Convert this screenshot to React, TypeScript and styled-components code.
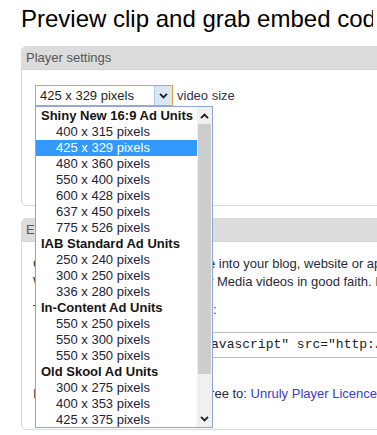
import styled, { createGlobalStyle } from "styled-components";

const GlobalStyle = createGlobalStyle`
  html, body {
    margin: 0;
    padding: 0;
    overflow: hidden;
    background: #ffffff;
  }
  body {
    font-family: "Liberation Sans", Arial, sans-serif;
    color: #333333;
  }
`;

type Group = { label: string; sizes: string[] };

const groups: Group[] = [
  {
    label: "Shiny New 16:9 Ad Units",
    sizes: ["400 x 315", "425 x 329", "480 x 360", "550 x 400", "600 x 428", "637 x 450", "775 x 526"],
  },
  { label: "IAB Standard Ad Units", sizes: ["250 x 240", "300 x 250", "336 x 280"] },
  { label: "In-Content Ad Units", sizes: ["550 x 250", "550 x 300", "550 x 350"] },
  { label: "Old Skool Ad Units", sizes: ["300 x 275", "400 x 353", "425 x 375"] },
];

const selected = "425 x 329";

function Chevron({ dir }: { dir: "up" | "down" }) {
  return (
    <svg width="9" height="6" viewBox="0 0 9 6">
      <polyline
        points={dir === "up" ? "1,5.2 4.5,1.6 8,5.2" : "1,0.8 4.5,4.4 8,0.8"}
        fill="none"
        stroke="#1e1e1e"
        strokeWidth="1.8"
      />
    </svg>
  );
}

export default function App() {
  return (
    <>
      <GlobalStyle />
      <Page>
        <Title>Preview clip and grab embed code</Title>

        <Panel>
          <PanelHeader>Player settings</PanelHeader>
          <PanelBody $height={135}>
            <SettingsRow>
              <SelectWrap>
                <SelectBox>
                  <SelectValue>425 x 329 pixels</SelectValue>
                  <SelectButton>
                    <Chevron dir="down" />
                  </SelectButton>
                </SelectBox>
                <DropList>
                  <Options>
                    {groups.map((g) => (
                      <div key={g.label}>
                        <GroupLabel>{g.label}</GroupLabel>
                        {g.sizes.map((s) => (
                          <Option key={s} $active={s === selected && g.label.startsWith("Shiny")}>
                            {s} pixels
                          </Option>
                        ))}
                      </div>
                    ))}
                  </Options>
                  <ScrollBar>
                    <ScrollArrow>
                      <Chevron dir="up" />
                    </ScrollArrow>
                    <Thumb />
                    <ScrollTrack />
                    <ScrollArrow>
                      <Chevron dir="down" />
                    </ScrollArrow>
                  </ScrollBar>
                </DropList>
              </SelectWrap>
              <FieldLabel>video size</FieldLabel>
            </SettingsRow>
          </PanelBody>
        </Panel>

        <Panel $gap={12}>
          <PanelHeader>Embed code</PanelHeader>
          <PanelBody $height={187}>
            <EmbedContent>
              <Para>
                Copy the code below and paste into your blog, website or app and share it
                <br />
                We trust that you use all Unruly Media videos in good faith. If you have any questions
              </Para>
              <Para>To embed, copy the code given:</Para>
              <CodeBox>&lt;script type="text/javascript" src="http://video.unrulymedia.com/</CodeBox>
              <Para>
                I have read understood and agree to: <Link>Unruly Player Licence Agreement</Link>
              </Para>
            </EmbedContent>
          </PanelBody>
        </Panel>
      </Page>
    </>
  );
}

const Page = styled.div`
  padding: 5px 0 0 21px;
  width: 460px;
`;

const Title = styled.h1`
  margin: 0;
  width: 352px;
  overflow: hidden;
  font-size: 24px;
  line-height: 27px;
  font-weight: normal;
  color: #000000;
  white-space: nowrap;
`;

const Panel = styled.section<{ $gap?: number }>`
  margin-top: ${(p) => p.$gap ?? 14}px;
  width: 420px;
  border: 1px solid #d9d9d9;
  border-radius: 5px;
  background: #ffffff;
`;

const PanelHeader = styled.div`
  height: 22px;
  line-height: 22px;
  padding-left: 4px;
  background: #dcdcdc;
  border-radius: 4px 4px 0 0;
  border-bottom: 1px solid #d2d2d2;
  font-size: 13px;
  color: #555555;
`;

const PanelBody = styled.div<{ $height: number }>`
  height: ${(p) => p.$height}px;
  box-sizing: border-box;
`;

const SettingsRow = styled.div`
  display: flex;
  align-items: center;
  gap: 4px;
  padding: 15px 0 0 13px;
`;

const SelectWrap = styled.div`
  position: relative;
`;

const SelectBox = styled.div`
  display: flex;
  width: 138px;
  height: 21px;
  box-sizing: border-box;
  border: 1px solid #e2a244;
  background: #ffffff;
`;

const SelectValue = styled.div`
  flex: 1;
  padding-left: 4px;
  font-size: 13px;
  line-height: 19px;
  color: #1e1e1e;
`;

const SelectButton = styled.div`
  width: 17px;
  display: flex;
  align-items: center;
  justify-content: center;
  background: #dae6f4;
  border-left: 1px solid #b2c8e6;
`;

const FieldLabel = styled.span`
  font-size: 13px;
  color: #33334a;
`;

const DropList = styled.div`
  position: absolute;
  left: 0;
  top: 21px;
  width: 178px;
  height: 322px;
  box-sizing: border-box;
  border: 1px solid #90a8d0;
  background: #ffffff;
  display: flex;
  z-index: 5;
`;

const Options = styled.div`
  flex: 1;
  padding-top: 1px;
  overflow: hidden;
`;

const GroupLabel = styled.div`
  height: 16px;
  line-height: 16px;
  padding-left: 5px;
  font-size: 13px;
  font-weight: bold;
  color: #141414;
  white-space: nowrap;
`;

const Option = styled.div<{ $active?: boolean }>`
  height: 16px;
  line-height: 16px;
  padding-left: 20px;
  font-size: 13px;
  white-space: nowrap;
  color: ${(p) => (p.$active ? "#ffffff" : "#22223a")};
  background: ${(p) => (p.$active ? "#3399ff" : "transparent")};
`;

const ScrollBar = styled.div`
  width: 15px;
  display: flex;
  flex-direction: column;
  background: #f0f0f0;
`;

const ScrollArrow = styled.div`
  height: 17px;
  display: flex;
  align-items: center;
  justify-content: center;
  background: #f0f0f0;
`;

const Thumb = styled.div`
  height: 250px;
  margin: 0 1px;
  background: #cdcdcd;
`;

const ScrollTrack = styled.div`
  flex: 1;
`;

const EmbedContent = styled.div`
  padding: 13px 0 0 11px;
`;

const Para = styled.p`
  margin: 0 0 10px;
  font-size: 13px;
  line-height: 18px;
  color: #2a2a3a;
  white-space: nowrap;
`;

const CodeBox = styled.div`
  margin: 13px 0 27px 7px;
  height: 26px;
  box-sizing: border-box;
  border: 1px solid #bdbdbd;
  border-right: none;
  padding-left: 14px;
  font-family: "Liberation Mono", "Courier New", monospace;
  font-size: 13px;
  line-height: 24px;
  color: #222222;
  white-space: nowrap;
  overflow: hidden;
`;

const Link = styled.span`
  color: #3b3bc4;
`;
